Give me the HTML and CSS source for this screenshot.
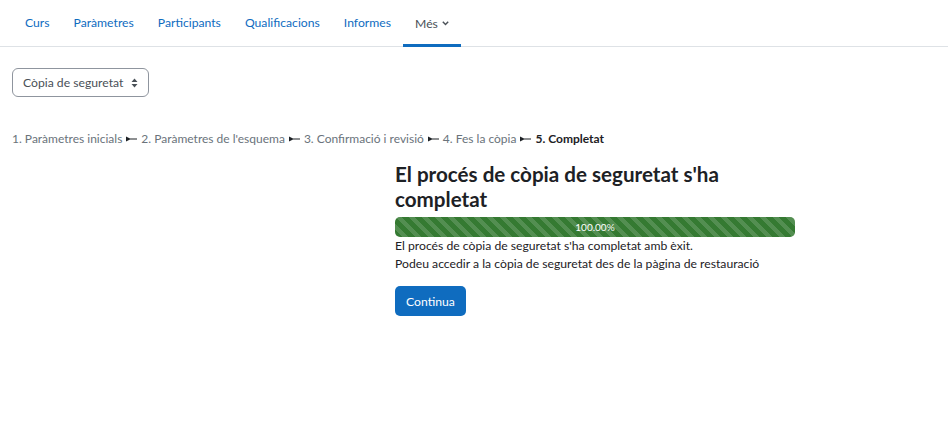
FILE: index.html
```html
<!DOCTYPE html>
<html lang="ca">
<head>
  <meta charset="UTF-8">
  <title>Còpia de seguretat</title>
  <link rel="stylesheet" href="styles.css">
</head>
<body>

<!-- Secondary navigation -->
<nav class="secondary-nav">
  <a href="#" class="nav-link">Curs</a>
  <a href="#" class="nav-link">Paràmetres</a>
  <a href="#" class="nav-link">Participants</a>
  <a href="#" class="nav-link">Qualificacions</a>
  <a href="#" class="nav-link">Informes</a>
  <a href="#" class="nav-link active">Més
    <svg class="caret" width="7" height="5" viewBox="0 0 7 5"><path d="M0.8 0.8 L3.5 3.6 L6.2 0.8" fill="none" stroke="currentColor" stroke-width="1.4"/></svg>
  </a>
</nav>

<div class="page">
  <div class="select-box">
    <span>Còpia de seguretat</span>
    <svg class="updown" width="7" height="10" viewBox="0 0 7 10"><path d="M3.5 0.5 L6.5 4 H0.5 Z M3.5 9.5 L6.5 6 H0.5 Z" fill="#495057"/></svg>
  </div>

  <!-- Backup steps -->
  <div class="backup-steps">
    <span>1. Paràmetres inicials</span>
    <svg class="sep" width="11" height="6" viewBox="0 0 11 6"><path d="M0 0.5 L4 2.4 H11 V3.6 H4 L0 5.5 Z" fill="#1d2125"/></svg>
    <span>2. Paràmetres de l'esquema</span>
    <svg class="sep" width="11" height="6" viewBox="0 0 11 6"><path d="M0 0.5 L4 2.4 H11 V3.6 H4 L0 5.5 Z" fill="#1d2125"/></svg>
    <span>3. Confirmació i revisió</span>
    <svg class="sep" width="11" height="6" viewBox="0 0 11 6"><path d="M0 0.5 L4 2.4 H11 V3.6 H4 L0 5.5 Z" fill="#1d2125"/></svg>
    <span>4. Fes la còpia</span>
    <svg class="sep" width="11" height="6" viewBox="0 0 11 6"><path d="M0 0.5 L4 2.4 H11 V3.6 H4 L0 5.5 Z" fill="#1d2125"/></svg>
    <span class="current">5. Completat</span>
  </div>

  <div class="result">
    <h2>El procés de còpia de seguretat s'ha completat</h2>
    <div class="progress">
      <div class="progress-bar" style="width: 100%">100.00%</div>
    </div>
    <p>El procés de còpia de seguretat s'ha completat amb èxit.</p>
    <p>Podeu accedir a la còpia de seguretat des de la pàgina de restauració</p>
    <button class="btn-primary">Continua</button>
  </div>
</div>

</body>
</html>
```

FILE: styles.css
```css
:root {
  --primary: #0f6cbf;
  --text: #1d2125;
  --muted: #6a737b;
  --border: #dee2e6;
  --success: #357a32;
}

body {
  margin: 0;
  font-family: Lato, 'Liberation Sans', sans-serif;
  font-size: 12.2px;
  color: var(--text);
  background: white;
}

.secondary-nav {
  display: flex;
  padding: 0 13px;
  height: 46px;
  border-bottom: 1px solid var(--border);
}

.nav-link {
  display: flex;
  align-items: center;
  gap: 4px;
  padding: 0 12px 1px;
  color: var(--primary);
  text-decoration: none;
}

.nav-link.active {
  color: #495057;
  box-shadow: inset 0 -3px 0 var(--primary);
  margin-bottom: -1px;
}

.caret {
  margin-top: 1px;
}

.page {
  padding: 0 12px;
}

.select-box {
  display: inline-flex;
  align-items: center;
  gap: 8px;
  margin-top: 21px;
  height: 27px;
  padding: 0 10px 0 10px;
  border: 1px solid #8f959e;
  border-radius: 6px;
  color: #495057;
}

.backup-steps {
  display: flex;
  align-items: center;
  gap: 4px;
  margin-top: 33px;
  line-height: 18px;
  color: var(--muted);
  font-size: 12px;
}

.backup-steps .current {
  color: var(--text);
  font-weight: bold;
}

.result {
  width: 400px;
  margin: 14px 0 0 383px;
}

.result h2 {
  margin: 0 0 5px;
  font-size: 20.6px;
  line-height: 25px;
  font-weight: bold;
}

.progress {
  height: 20px;
  border-radius: 5px;
  overflow: hidden;
  background: #e9ecef;
}

.progress-bar {
  height: 100%;
  background-color: var(--success);
  background-image: linear-gradient(45deg,
    rgba(255, 255, 255, 0.15) 25%, transparent 25%,
    transparent 50%, rgba(255, 255, 255, 0.15) 50%,
    rgba(255, 255, 255, 0.15) 75%, transparent 75%, transparent);
  background-size: 13px 13px;
  color: white;
  font-size: 10px;
  line-height: 20px;
  text-align: center;
}

.result p {
  margin: 0;
  line-height: 18px;
}

.btn-primary {
  margin-top: 13px;
  height: 30px;
  padding: 0 11px;
  border: none;
  border-radius: 5px;
  background: var(--primary);
  color: white;
  font-family: inherit;
  font-size: 12.2px;
}
```
